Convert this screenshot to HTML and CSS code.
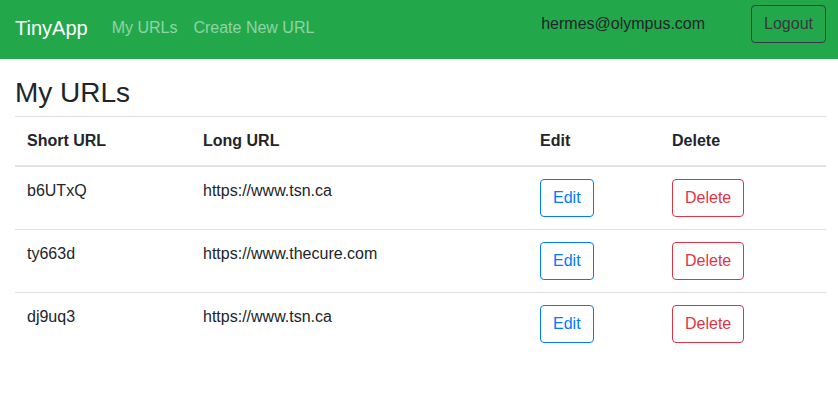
FILE: index.html
```html
<!DOCTYPE html>
<html lang="en">
<head>
<meta charset="utf-8">
<title>TinyApp</title>
<link rel="stylesheet" href="styles.css">
</head>
<body>
<nav class="navbar">
  <a class="brand" href="#">TinyApp</a>
  <a class="nav-link" href="#">My URLs</a>
  <a class="nav-link" href="#">Create New URL</a>
  <span class="user">hermes@olympus.com</span>
  <button class="btn btn-dark">Logout</button>
</nav>
<main class="container">
  <h3 class="title">My URLs</h3>
  <table class="table">
    <colgroup>
      <col class="c1"><col class="c2"><col class="c3"><col class="c4">
    </colgroup>
    <thead>
      <tr><th>Short URL</th><th>Long URL</th><th>Edit</th><th>Delete</th></tr>
    </thead>
    <tbody>
      <tr><td>b6UTxQ</td><td>https://www.tsn.ca</td><td><button class="btn btn-primary">Edit</button></td><td><button class="btn btn-danger">Delete</button></td></tr>
      <tr><td>ty663d</td><td>https://www.thecure.com</td><td><button class="btn btn-primary">Edit</button></td><td><button class="btn btn-danger">Delete</button></td></tr>
      <tr><td>dj9uq3</td><td>https://www.tsn.ca</td><td><button class="btn btn-primary">Edit</button></td><td><button class="btn btn-danger">Delete</button></td></tr>
    </tbody>
  </table>
</main>
</body>
</html>
```
FILE: styles.css
```css
* { box-sizing: border-box; }
html, body { margin: 0; padding: 0; }
body {
  font-family: "Liberation Sans", Arial, sans-serif;
  font-size: 16px;
  line-height: 24px;
  color: #212529;
  background: #fff;
}
a { text-decoration: none; }

.navbar {
  display: flex;
  align-items: flex-start;
  height: 59px;
  padding: 5px 12px 0 15px;
  background: #22a84b;
}
.brand {
  margin-top: 3px;
  padding: 5px 0;
  margin-right: 16px;
  font-size: 20px;
  line-height: 30px;
  color: #fff;
}
.nav-link {
  margin-top: 3px;
  padding: 8px;
  color: rgba(255, 255, 255, 0.5);
}
.user {
  margin-left: auto;
  margin-right: 46px;
  padding: 7px 0;
  color: #212529;
}
.btn {
  display: inline-block;
  font-family: inherit;
  font-size: 16px;
  line-height: 24px;
  padding: 6px 12px;
  border: 1px solid transparent;
  border-radius: 4px;
  background: transparent;
  cursor: pointer;
}
.btn-dark { color: #343a40; border-color: #343a40; }
.btn-primary { color: #007bff; border-color: #007bff; }
.btn-danger { color: #dc3545; border-color: #dc3545; }

.container {
  padding: 17px 12px 0 15px;
}
.title {
  margin: 0 0 6px;
  font-size: 28px;
  font-weight: 500;
  line-height: 1.2;
}
.table {
  width: 811px;
  border-collapse: collapse;
  table-layout: fixed;
}
.c1 { width: 176px; }
.c2 { width: 337px; }
.c3 { width: 132px; }
.c4 { width: 166px; }
.table th, .table td {
  padding: 12px;
  text-align: left;
  vertical-align: top;
  border-top: 1px solid #dee2e6;
}
.table thead th {
  vertical-align: bottom;
  border-bottom: 2px solid #dee2e6;
  font-weight: bold;
}
```
